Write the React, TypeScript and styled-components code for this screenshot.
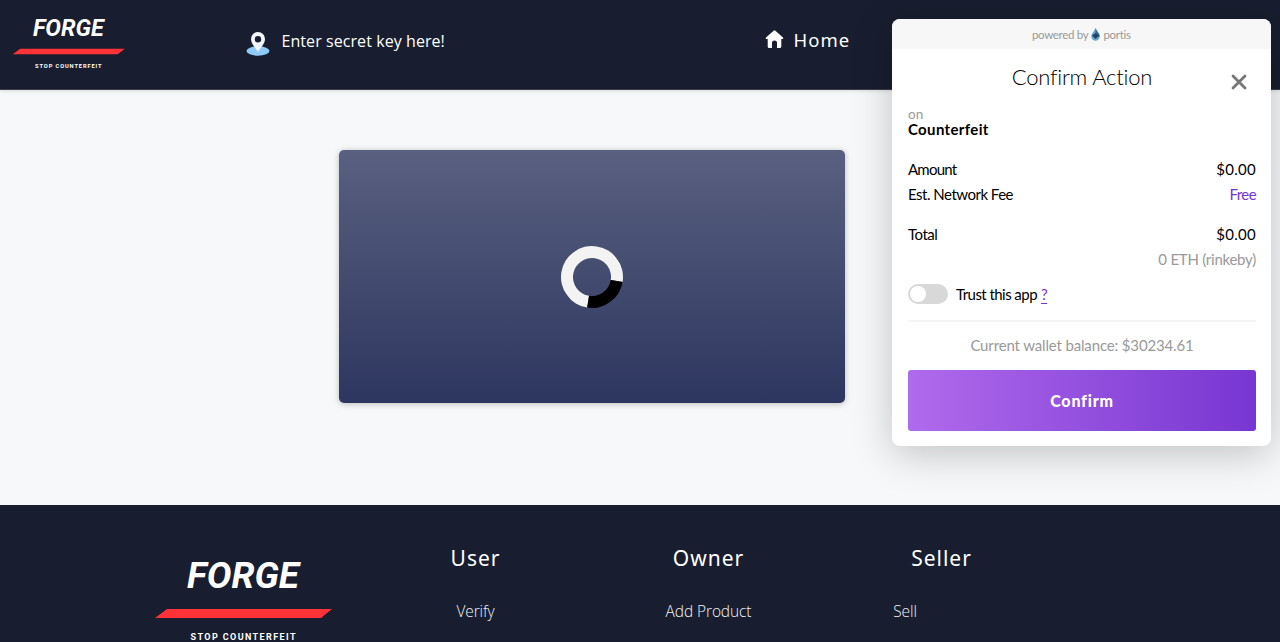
import React from "react";
import styled, { createGlobalStyle } from "styled-components";

const GlobalStyle = createGlobalStyle`
  * { box-sizing: border-box; }
  html, body { margin: 0; height: 100%; overflow: hidden; }
  body { background: #f7f8fa; font-family: "Open Sans", "Noto Sans", sans-serif; color: #fff; }
`;

const Page = styled.div`
  display: flex;
  flex-direction: column;
  height: 642px;
  overflow: hidden;
`;

const Header = styled.header`
  display: flex;
  align-items: flex-start;
  flex: none;
  height: 90px;
  padding-left: 12px;
  background: #181e2f;
  border-bottom: 1px solid #3c3b4b;
  box-shadow: 0 1px 4px rgba(0, 0, 0, 0.12);
`;

const LogoSvg = styled.svg<{ $width: number; $top: number }>`
  display: block;
  flex: none;
  width: ${(p) => p.$width}px;
  margin-top: ${(p) => p.$top}px;
  overflow: visible;
`;

const SecretKey = styled.div`
  display: flex;
  align-items: center;
  gap: 11.5px;
  margin: 30px 0 0 120px;
  width: 518.5px;
  height: 28px;
  font-size: 16px;
  line-height: 24px;
`;

const SecretLabel = styled.span`
  letter-spacing: 0.07px;
  padding-bottom: 7px;
`;

const HomeLink = styled.a`
  display: flex;
  align-items: center;
  gap: 10px;
  margin-top: 26px;
  height: 26px;
  font-family: "Noto Sans", sans-serif;
  font-size: 18.5px;
  letter-spacing: 1px;
`;

const Main = styled.main`
  flex: none;
  height: 415px;
  padding: 60px 0 0 339px;
`;

const LoaderCard = styled.section`
  display: flex;
  align-items: center;
  justify-content: center;
  width: 506px;
  height: 253px;
  padding-top: 1px;
  border-radius: 5px;
  background: linear-gradient(#596080, #2d365f);
  box-shadow: 0 1px 6px rgba(0, 0, 0, 0.25);
`;

const Spinner = styled.div`
  width: 62px;
  height: 62px;
  border: 12px solid #f3f3f3;
  border-right-color: #000;
  border-radius: 50%;
  transform: rotate(54deg);
`;

const Footer = styled.footer`
  display: grid;
  grid-template-columns: repeat(4, 233px);
  flex: none;
  height: 137px;
  padding-left: 126px;
  background: #181e2f;
`;

const FooterLogo = styled.div`
  display: flex;
  justify-content: center;
  align-items: flex-start;
  padding-left: 2px;
`;

const FooterColumn = styled.div`
  display: flex;
  flex-direction: column;
  align-items: center;
  padding-top: 38px;
`;

const FooterHeading = styled.h4`
  margin: 0;
  font: 400 21px/30px "Noto Sans", sans-serif;
  letter-spacing: 1px;
`;

const FooterLink = styled.a<{ $shift?: number }>`
  margin-top: 26px;
  margin-right: ${(p) => p.$shift ?? 0}px;
  font-size: 15.5px;
  font-weight: 300;
  line-height: 24px;
  letter-spacing: -0.1px;
  color: #f0f2f6;
`;

const Dialog = styled.aside`
  position: absolute;
  top: 19px;
  left: 891.5px;
  width: 379.5px;
  height: 427px;
  overflow: hidden;
  border-radius: 8px;
  background: #fff;
  color: #000;
  font-family: Lato, sans-serif;
  box-shadow: 0 8px 40px rgba(0, 0, 0, 0.22);
`;

const PoweredBy = styled.div`
  display: flex;
  align-items: center;
  justify-content: center;
  gap: 3px;
  height: 30px;
  background: #f7f7f7;
  color: #999;
  font-size: 11.5px;
  letter-spacing: -0.3px;
`;

const DialogBody = styled.div`
  display: flex;
  flex-direction: column;
  padding: 0 15px 0 16.5px;
`;

const TitleRow = styled.div`
  display: grid;
  grid-template-columns: 32px 1fr 32px;
  align-items: center;
  height: 57px;
`;

const Title = styled.h1`
  grid-column: 2;
  margin: 0 0 3px;
  text-align: center;
  font-size: 22px;
  font-weight: 300;
  letter-spacing: -0.2px;
`;

const CloseButton = styled.button`
  display: flex;
  margin: 9px 0 0 6.5px;
  padding: 0;
  border: 0;
  background: none;
`;

const Origin = styled.div`
  display: flex;
  flex-direction: column;
  height: 51px;
  padding-top: 1px;
  font-size: 13.5px;
  line-height: 15px;
  color: #999;
`;

const AppName = styled.strong`
  font-size: 15px;
  line-height: 15px;
  letter-spacing: 0.35px;
  font-weight: 700;
  color: #000;
`;

const Row = styled.div<{ $gap?: number }>`
  display: flex;
  justify-content: space-between;
  height: 24.5px;
  margin-top: ${(p) => p.$gap ?? 0}px;
  font-size: 15px;
  line-height: 25px;
`;

const Label = styled.span<{ $tracking: number }>`
  letter-spacing: ${(p) => p.$tracking}px;
`;

const Value = styled.span<{ $color?: string; $tracking?: number }>`
  margin-left: auto;
  letter-spacing: ${(p) => p.$tracking ?? 0.3}px;
  color: ${(p) => p.$color ?? "#000"};
`;

const TrustRow = styled.div`
  display: flex;
  align-items: center;
  height: 51px;
  padding-bottom: 3px;
  border-bottom: 2px solid #f5f5f5;
  font-size: 15px;
  letter-spacing: -0.55px;
`;

const Toggle = styled.span`
  display: flex;
  align-items: center;
  width: 40px;
  height: 20px;
  margin-right: 8px;
  padding: 2px;
  border-radius: 10px;
  background: #d8d8d8;
  &::before {
    content: "";
    width: 16px;
    height: 16px;
    border-radius: 50%;
    background: #fff;
  }
`;

const Help = styled.a`
  margin-left: 4px;
  color: #7434cf;
  text-decoration: underline;
  text-underline-offset: 3px;
`;

const Balance = styled.p`
  margin: 0;
  height: 48px;
  text-align: center;
  font-size: 15px;
  line-height: 46px;
  letter-spacing: -0.15px;
  color: #999;
`;

const ConfirmButton = styled.button`
  height: 61px;
  border: 0;
  border-radius: 3px;
  background: linear-gradient(90deg, #b06aec, #7736d1);
  color: #fff;
  font: 900 16px Lato, sans-serif;
  letter-spacing: 0.8px;
`;

function Logo({ width, top }: { width: number; top: number }) {
  return (
    <LogoSvg $width={width} $top={top} viewBox="0 -12 180 97">
      <text x="33" y="28.3" textLength="112" lengthAdjust="spacingAndGlyphs" fill="#fff"
        fontFamily="Roboto, sans-serif" fontSize="36.500" fontWeight="700" fontStyle="italic">FORGE</text>
      <path d="M13 49H178L167 58H1Z" fill="#ff3237" />
      <text x="36.500" y="79.700" textLength="105" fill="#fff" fontFamily="Roboto, sans-serif"
        fontSize="9" fontWeight="700">STOP COUNTERFEIT</text>
    </LogoSvg>
  );
}

const PinIcon = () => (
  <svg width="24" height="26" viewBox="0 0 24 26">
    <ellipse cx="12" cy="20" rx="11.5" ry="4.7" fill="#90caf9" />
    <path fillRule="evenodd" fill="#f3f5fc"
      d="M12 1a7 7 0 0 0-7 7c0 5 4.500 8.500 7 13 2.500-4.500 7-8 7-13a7 7 0 0 0-7-7Zm0 4a3.200 3.200 0 1 1 0 6.400A3.200 3.200 0 0 1 12 5Z" />
  </svg>
);

const HomeIcon = () => (
  <svg width="19" height="19" viewBox="0 0 19 19">
    <path fill="#fff"
      d="M8.600.700Q9.500 0 10.400.700L18 7.500Q18.600 8.200 18 9H16.300V16.500Q16.300 18 14.800 18H12V12.500Q12 10.500 9.500 10.500T7 12.500V18H4.200Q2.700 18 2.700 16.500V9H1Q.4 8.200 1 7.500Z" />
  </svg>
);

const DropIcon = () => (
  <svg width="9" height="13" viewBox="0 0 9 13">
    <path d="M4.500 0C3.500 3 .3 5.500.3 8.500a4.200 4.200 0 0 0 8.400 0C8.700 5.500 5.500 3 4.500 0Z" fill="#6fa3cb" />
    <path d="M4.500 0C5.500 3 8.700 5.500 8.700 8.500L4.500 9.800Z" fill="#3c6c99" />
    <path d="M1 7.500 4.500 5l3.700 2.500-3.700 3.500Z" fill="#1f4468" />
  </svg>
);

const CloseIcon = () => (
  <svg width="16" height="16" viewBox="0 0 16 16">
    <path d="M2 2 14 14M14 2 2 14" stroke="#767676" strokeWidth="2.800" strokeLinecap="round" />
  </svg>
);

export default function App() {
  return (
    <>
      <GlobalStyle />
      <Page>
        <Header>
          <Logo width={114} top={10} />
          <SecretKey>
            <PinIcon />
            <SecretLabel>Enter secret key here!</SecretLabel>
          </SecretKey>
          <HomeLink>
            <HomeIcon />
            Home
          </HomeLink>
        </Header>
        <Main>
          <LoaderCard>
            <Spinner />
          </LoaderCard>
        </Main>
        <Footer>
          <FooterLogo>
            <Logo width={180} top={43} />
          </FooterLogo>
          <FooterColumn>
            <FooterHeading>User</FooterHeading>
            <FooterLink>Verify</FooterLink>
          </FooterColumn>
          <FooterColumn>
            <FooterHeading>Owner</FooterHeading>
            <FooterLink>Add Product</FooterLink>
          </FooterColumn>
          <FooterColumn>
            <FooterHeading>Seller</FooterHeading>
            <FooterLink $shift={73}>Sell</FooterLink>
          </FooterColumn>
        </Footer>
      </Page>
      <Dialog>
        <PoweredBy>
          <span>powered by</span>
          <DropIcon />
          <span>portis</span>
        </PoweredBy>
        <DialogBody>
          <TitleRow>
            <Title>Confirm Action</Title>
            <CloseButton aria-label="Close">
              <CloseIcon />
            </CloseButton>
          </TitleRow>
          <Origin>
            on
            <AppName>Counterfeit</AppName>
          </Origin>
          <Row>
            <Label $tracking={-0.75}>Amount</Label>
            <Value>$0.00</Value>
          </Row>
          <Row>
            <Label $tracking={-0.5}>Est. Network Fee</Label>
            <Value $color="#7434cf" $tracking={-0.6}>Free</Value>
          </Row>
          <Row $gap={16}>
            <Label $tracking={-0.5}>Total</Label>
            <Value>$0.00</Value>
          </Row>
          <Row>
            <Value $color="#999" $tracking={-0.25}>0 ETH (rinkeby)</Value>
          </Row>
          <TrustRow>
            <Toggle />
            Trust this app <Help>?</Help>
          </TrustRow>
          <Balance>Current wallet balance: $30234.61</Balance>
          <ConfirmButton>Confirm</ConfirmButton>
        </DialogBody>
      </Dialog>
    </>
  );
}
